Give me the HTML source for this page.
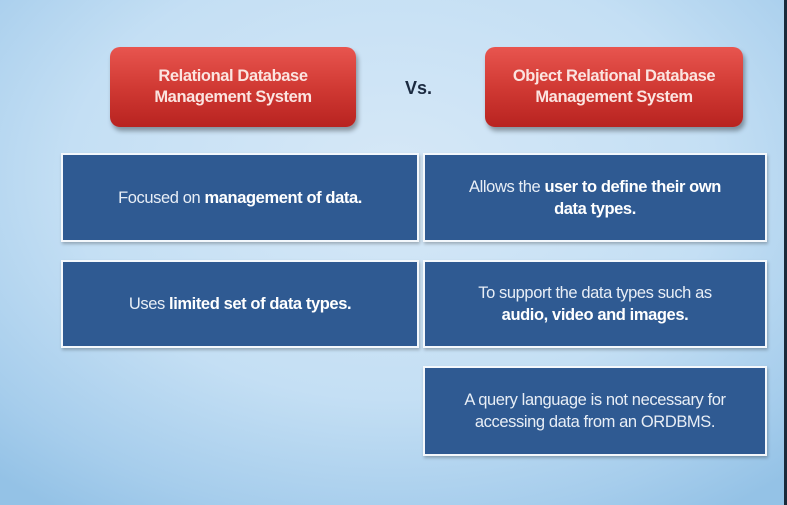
<!DOCTYPE html>
<html><head><style>
body{margin:0;width:787px;height:505px;overflow:hidden;font-family:"Liberation Sans",sans-serif;}
.bg{position:absolute;left:0;top:0;width:784px;height:505px;background:radial-gradient(ellipse 75% 80% at 50% 35%,#d6e8f7 0%,#c4dff4 55%,#a6cdec 85%,#94c2e6 100%);}
.edge{position:absolute;left:784px;top:0;width:3px;height:505px;background:#1a2a3a;}
.red{position:absolute;height:80px;border-radius:10px;background:linear-gradient(#e8554f,#d13a34 50%,#b82320);box-shadow:2px 4px 5px rgba(0,0,0,.35);color:#fbe4e0;font-weight:bold;font-size:16.5px;letter-spacing:-0.4px;line-height:21px;text-align:center;display:flex;align-items:center;justify-content:center;}
.box{position:absolute;background:#2f5a92;border:2px solid #f4f8fc;box-shadow:1px 2px 3px rgba(0,0,0,.25);color:#e8eef6;font-size:16.5px;letter-spacing:-0.4px;line-height:22px;text-align:center;display:flex;align-items:center;justify-content:center;box-sizing:border-box;}
.box b{color:#fff}
.vs{position:absolute;left:405px;top:78px;font-size:18px;font-weight:bold;color:#1b2a40;}
</style></head><body>
<div class="bg"></div><div class="edge"></div>
<div class="red" style="left:110px;top:47px;width:246px">Relational Database<br>Management System</div>
<div class="vs">Vs.</div>
<div class="red" style="left:485px;top:47px;width:258px">Object Relational Database<br>Management System</div>
<div class="box" style="left:61px;top:153px;width:358px;height:89px">Focused on&nbsp;<b>management of data.</b></div>
<div class="box" style="left:423px;top:153px;width:344px;height:89px"><span>Allows the <b>user to define their own<br>data types.</b></span></div>
<div class="box" style="left:61px;top:260px;width:358px;height:88px">Uses&nbsp;<b>limited set of data types.</b></div>
<div class="box" style="left:423px;top:260px;width:344px;height:88px"><span>To support the data types such as<br><b>audio, video and images.</b></span></div>
<div class="box" style="left:423px;top:366px;width:344px;height:90px"><span>A query language is not necessary for<br>accessing data from an ORDBMS.</span></div>
</body></html>
